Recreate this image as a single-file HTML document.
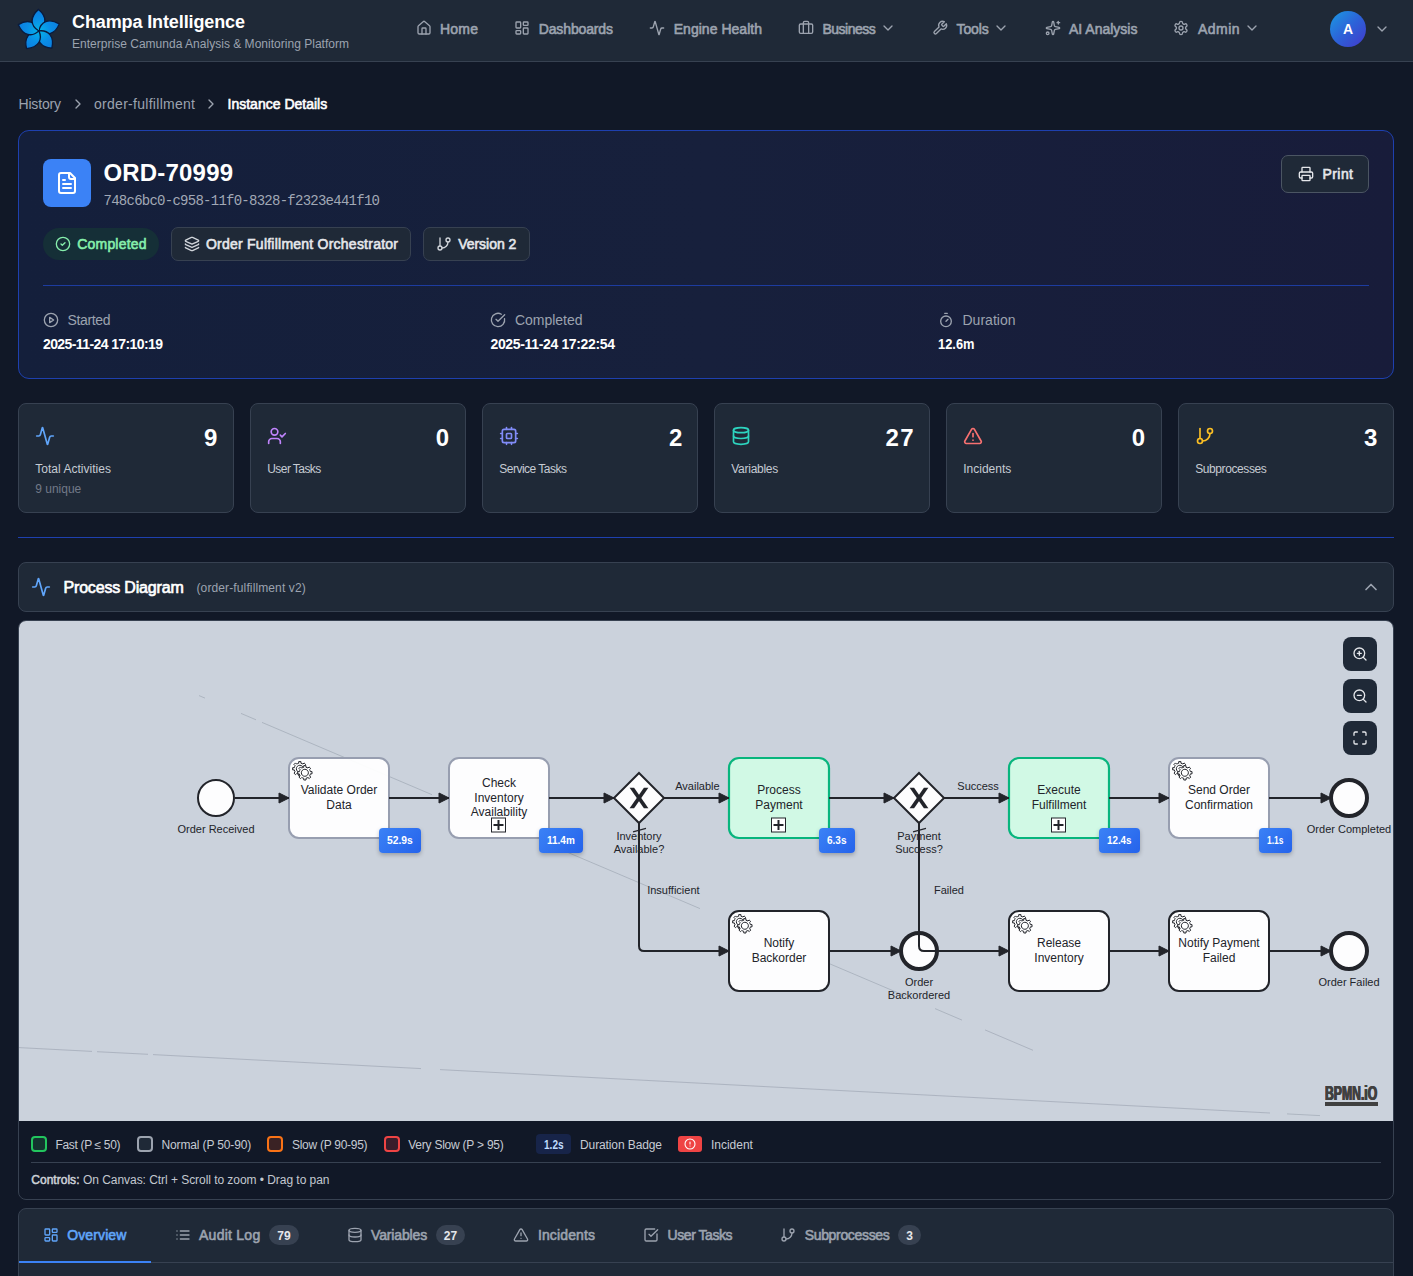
<!DOCTYPE html>
<html lang="en"><head><meta charset="utf-8"><title>Instance Details - Champa Intelligence</title><style>
html,body{margin:0;padding:0}
body{position:relative;width:1413px;height:1276px;overflow:hidden;background:#111827;font-family:"Liberation Sans",Arial,sans-serif;color:#fff}
nav,header,section,a{display:contents}
div,span.t,svg.ic,svg.bpmn{position:absolute;box-sizing:border-box}
svg.ic,svg.bpmn{display:block;overflow:visible}
span.t{white-space:pre;line-height:1;display:block}
span.m{font-family:"Liberation Mono",monospace}
</style></head>
<body>
<nav>
<div style="left:0px;top:0px;width:1413px;height:61px;background:#1f2937;border-bottom:1px solid #374151;box-sizing:content-box"></div>
<svg class="ic" style="left:14px;top:4px" width="50" height="52" viewBox="14 4 50 52"><defs><radialGradient id="pg" gradientUnits="userSpaceOnUse" cx="0" cy="0" r="22"><stop offset="0" stop-color="#04b4e8"/><stop offset=".55" stop-color="#0a8de6"/><stop offset="1" stop-color="#0b7de0"/></radialGradient><clipPath id="half"><rect x="-30" y="-30" width="30" height="60"/></clipPath></defs><g transform="translate(38.9,30.9)" stroke="#0a1b3d" stroke-width="1.3" stroke-linejoin="round" fill="url(#pg)"><path d="M0,0 C-8.2,-4.5 -9.6,-13.5 -0.4,-21.5 C8.2,-14.5 7.8,-6 0,0 Z" transform="rotate(0)"/><path d="M0,0 C-8.2,-4.5 -9.6,-13.5 -0.4,-21.5 C8.2,-14.5 7.8,-6 0,0 Z" transform="rotate(72)"/><path d="M0,0 C-8.2,-4.5 -9.6,-13.5 -0.4,-21.5 C8.2,-14.5 7.8,-6 0,0 Z" transform="rotate(144)"/><path d="M0,0 C-8.2,-4.5 -9.6,-13.5 -0.4,-21.5 C8.2,-14.5 7.8,-6 0,0 Z" transform="rotate(216)"/><path d="M0,0 C-8.2,-4.5 -9.6,-13.5 -0.4,-21.5 C8.2,-14.5 7.8,-6 0,0 Z" transform="rotate(288)"/><path d="M0,0 C-8.2,-4.5 -9.6,-13.5 -0.4,-21.5 C8.2,-14.5 7.8,-6 0,0 Z" clip-path="url(#half)"/></g></svg>
<span class="t" style="left:72.00px;top:13.00px;font-size:18px;color:#fff;font-weight:700;letter-spacing:-0.114px">Champa Intelligence</span>
<span class="t" style="left:72.00px;top:38.00px;font-size:12px;color:#9ca3af;letter-spacing:0.018px">Enterprise Camunda Analysis &amp; Monitoring Platform</span>
<a>
<svg class="ic" style="left:416px;top:20px;color:#9ca3af" width="16" height="16" viewBox="0 0 24 24" fill="none" stroke="currentColor" stroke-width="2" stroke-linecap="round" stroke-linejoin="round"><path d="M15 21v-8a1 1 0 0 0-1-1h-4a1 1 0 0 0-1 1v8"/><path d="M3 10a2 2 0 0 1 .709-1.528l7-5.999a2 2 0 0 1 2.582 0l7 5.999A2 2 0 0 1 21 10v9a2 2 0 0 1-2 2H5a2 2 0 0 1-2-2z"/></svg>
<span class="t" style="left:440.00px;top:22.00px;font-size:14px;color:#9ca3af;-webkit-text-stroke:0.59px currentColor;letter-spacing:0.214px">Home</span>
</a>
<a>
<svg class="ic" style="left:513.5px;top:20px;color:#9ca3af" width="16" height="16" viewBox="0 0 24 24" fill="none" stroke="currentColor" stroke-width="2" stroke-linecap="round" stroke-linejoin="round"><rect width="7" height="9" x="3" y="3" rx="1"/><rect width="7" height="5" x="14" y="3" rx="1"/><rect width="7" height="9" x="14" y="12" rx="1"/><rect width="7" height="5" x="3" y="16" rx="1"/></svg>
<span class="t" style="left:538.75px;top:22.00px;font-size:14px;color:#9ca3af;-webkit-text-stroke:0.59px currentColor;letter-spacing:-0.139px">Dashboards</span>
</a>
<a>
<svg class="ic" style="left:648.75px;top:20px;color:#9ca3af" width="16" height="16" viewBox="0 0 24 24" fill="none" stroke="currentColor" stroke-width="2" stroke-linecap="round" stroke-linejoin="round"><path d="M22 12h-2.48a2 2 0 0 0-1.93 1.46l-2.35 8.36a.25.25 0 0 1-.48 0L9.24 2.18a.25.25 0 0 0-.48 0l-2.35 8.36A2 2 0 0 1 4.49 12H2"/></svg>
<span class="t" style="left:673.75px;top:22.00px;font-size:14px;color:#9ca3af;-webkit-text-stroke:0.59px currentColor;letter-spacing:0.025px">Engine Health</span>
</a>
<a>
<svg class="ic" style="left:797.5px;top:20px;color:#9ca3af" width="16" height="16" viewBox="0 0 24 24" fill="none" stroke="currentColor" stroke-width="2" stroke-linecap="round" stroke-linejoin="round"><path d="M16 20V4a2 2 0 0 0-2-2h-4a2 2 0 0 0-2 2v16"/><rect width="20" height="14" x="2" y="6" rx="2"/></svg>
<span class="t" style="left:822.50px;top:22.00px;font-size:14px;color:#9ca3af;-webkit-text-stroke:0.59px currentColor;letter-spacing:-0.509px">Business</span>
<svg class="ic" style="left:879.8px;top:20.3px;color:#9ca3af" width="16" height="16" viewBox="0 0 24 24" fill="none" stroke="currentColor" stroke-width="2" stroke-linecap="round" stroke-linejoin="round"><path d="m6 9 6 6 6-6"/></svg>
</a>
<a>
<svg class="ic" style="left:932px;top:20px;color:#9ca3af" width="16" height="16" viewBox="0 0 24 24" fill="none" stroke="currentColor" stroke-width="2" stroke-linecap="round" stroke-linejoin="round"><path d="M14.7 6.3a1 1 0 0 0 0 1.4l1.6 1.6a1 1 0 0 0 1.4 0l3.77-3.77a6 6 0 0 1-7.94 7.94l-6.91 6.91a2.12 2.12 0 0 1-3-3l6.91-6.91a6 6 0 0 1 7.94-7.94l-3.76 3.76z"/></svg>
<span class="t" style="left:956.50px;top:22.00px;font-size:14px;color:#9ca3af;-webkit-text-stroke:0.59px currentColor;letter-spacing:-0.109px">Tools</span>
<svg class="ic" style="left:992.8px;top:20.3px;color:#9ca3af" width="16" height="16" viewBox="0 0 24 24" fill="none" stroke="currentColor" stroke-width="2" stroke-linecap="round" stroke-linejoin="round"><path d="m6 9 6 6 6-6"/></svg>
</a>
<a>
<svg class="ic" style="left:1044.7px;top:20px;color:#9ca3af" width="16" height="16" viewBox="0 0 24 24" fill="none" stroke="currentColor" stroke-width="2" stroke-linecap="round" stroke-linejoin="round"><path d="M11.017 2.814a1 1 0 0 1 1.966 0l1.051 5.558a2 2 0 0 0 1.594 1.594l5.558 1.051a1 1 0 0 1 0 1.966l-5.558 1.051a2 2 0 0 0-1.594 1.594l-1.051 5.558a1 1 0 0 1-1.966 0l-1.051-5.558a2 2 0 0 0-1.594-1.594l-5.558-1.051a1 1 0 0 1 0-1.966l5.558-1.051a2 2 0 0 0 1.594-1.594z"/><path d="M20 2v4"/><path d="M22 4h-4"/><circle cx="4" cy="20" r="2"/></svg>
<span class="t" style="left:1069.00px;top:22.00px;font-size:14px;color:#9ca3af;-webkit-text-stroke:0.59px currentColor">AI Analysis</span>
</a>
<a>
<svg class="ic" style="left:1173px;top:20px;color:#9ca3af" width="16" height="16" viewBox="0 0 24 24" fill="none" stroke="currentColor" stroke-width="2" stroke-linecap="round" stroke-linejoin="round"><path d="M12.22 2h-.44a2 2 0 0 0-2 2v.18a2 2 0 0 1-1 1.73l-.43.25a2 2 0 0 1-2 0l-.15-.08a2 2 0 0 0-2.73.73l-.22.38a2 2 0 0 0 .73 2.73l.15.1a2 2 0 0 1 1 1.72v.51a2 2 0 0 1-1 1.74l-.15.09a2 2 0 0 0-.73 2.73l.22.38a2 2 0 0 0 2.73.73l.15-.08a2 2 0 0 1 2 0l.43.25a2 2 0 0 1 1 1.73V20a2 2 0 0 0 2 2h.44a2 2 0 0 0 2-2v-.18a2 2 0 0 1 1-1.73l.43-.25a2 2 0 0 1 2 0l.15.08a2 2 0 0 0 2.73-.73l.22-.39a2 2 0 0 0-.73-2.73l-.15-.08a2 2 0 0 1-1-1.74v-.5a2 2 0 0 1 1-1.74l.15-.09a2 2 0 0 0 .73-2.73l-.22-.38a2 2 0 0 0-2.73-.73l-.15.08a2 2 0 0 1-2 0l-.43-.25a2 2 0 0 1-1-1.73V4a2 2 0 0 0-2-2z"/><circle cx="12" cy="12" r="3"/></svg>
<span class="t" style="left:1198.00px;top:22.00px;font-size:14px;color:#9ca3af;-webkit-text-stroke:0.59px currentColor;letter-spacing:0.453px">Admin</span>
<svg class="ic" style="left:1244.3px;top:20.3px;color:#9ca3af" width="16" height="16" viewBox="0 0 24 24" fill="none" stroke="currentColor" stroke-width="2" stroke-linecap="round" stroke-linejoin="round"><path d="m6 9 6 6 6-6"/></svg>
</a>
<div style="left:1330px;top:11px;width:36px;height:36px;border-radius:50%;background:linear-gradient(135deg,#1a9be3 0%,#2c62d8 50%,#4338ca 100%)"></div>
<span class="t" style="left:1342.94px;top:22.00px;font-size:14px;color:#fff;font-weight:700">A</span>
<svg class="ic" style="left:1374px;top:21px;color:#9ca3af" width="16" height="16" viewBox="0 0 24 24" fill="none" stroke="currentColor" stroke-width="2" stroke-linecap="round" stroke-linejoin="round"><path d="m6 9 6 6 6-6"/></svg>
</nav>
<header>
<span class="t" style="left:18.50px;top:97.00px;font-size:14px;color:#9ca3af;letter-spacing:-0.177px">History</span>
<svg class="ic" style="left:70px;top:96px;color:#9ca3af" width="16" height="16" viewBox="0 0 24 24" fill="none" stroke="currentColor" stroke-width="2" stroke-linecap="round" stroke-linejoin="round"><path d="m9 18 6-6-6-6"/></svg>
<span class="t" style="left:94.00px;top:97.00px;font-size:14px;color:#9ca3af;letter-spacing:0.282px">order-fulfillment</span>
<svg class="ic" style="left:203px;top:96px;color:#9ca3af" width="16" height="16" viewBox="0 0 24 24" fill="none" stroke="currentColor" stroke-width="2" stroke-linecap="round" stroke-linejoin="round"><path d="m9 18 6-6-6-6"/></svg>
<span class="t" style="left:227.50px;top:97.00px;font-size:14px;color:#fff;-webkit-text-stroke:0.59px currentColor;letter-spacing:0.009px">Instance Details</span>
</header>
<section>
<div style="left:18px;top:130px;width:1376px;height:249px;border:1px solid #1e40af;border-radius:11px;background:linear-gradient(90deg,#141f3b,#17203c 50%,#181c3a)"></div>
<div style="left:43px;top:159px;width:48px;height:48px;background:#3b82f6;border-radius:8px"></div>
<svg class="ic" style="left:55px;top:171px;color:#fff" width="24" height="24" viewBox="0 0 24 24" fill="none" stroke="currentColor" stroke-width="2" stroke-linecap="round" stroke-linejoin="round"><path d="M15 2H6a2 2 0 0 0-2 2v16a2 2 0 0 0 2 2h12a2 2 0 0 0 2-2V7Z"/><path d="M14 2v4a2 2 0 0 0 2 2h4"/><path d="M10 9H8"/><path d="M16 13H8"/><path d="M16 17H8"/></svg>
<span class="t" style="left:103.50px;top:161.00px;font-size:24px;color:#fff;font-weight:700;letter-spacing:0.180px">ORD-70999</span>
<span class="t m" style="left:103.50px;top:194.00px;font-size:14px;color:#a1a8b5;letter-spacing:-0.742px">748c6bc0-c958-11f0-8328-f2323e441f10</span>
<div style="left:43px;top:228px;width:116px;height:32px;background:#152f37;border-radius:16px"></div>
<svg class="ic" style="left:55px;top:236px;color:#86efac" width="16" height="16" viewBox="0 0 24 24" fill="none" stroke="currentColor" stroke-width="2" stroke-linecap="round" stroke-linejoin="round"><circle cx="12" cy="12" r="10"/><path d="m9 12 2 2 4-4"/></svg>
<span class="t" style="left:77.25px;top:237.00px;font-size:14px;color:#86efac;-webkit-text-stroke:0.59px currentColor;letter-spacing:0.193px">Completed</span>
<div style="left:171px;top:227px;width:240px;height:34px;background:#1f2937;border:1px solid #374151;border-radius:7px"></div>
<svg class="ic" style="left:184px;top:236px;color:#d1d5db" width="16" height="16" viewBox="0 0 24 24" fill="none" stroke="currentColor" stroke-width="2" stroke-linecap="round" stroke-linejoin="round"><path d="M12.83 2.18a2 2 0 0 0-1.66 0L2.6 6.08a1 1 0 0 0 0 1.83l8.58 3.91a2 2 0 0 0 1.66 0l8.58-3.9a1 1 0 0 0 0-1.83z"/><path d="M2 12a1 1 0 0 0 .58.91l8.6 3.91a2 2 0 0 0 1.65 0l8.58-3.9A1 1 0 0 0 22 12"/><path d="M2 17a1 1 0 0 0 .58.91l8.6 3.91a2 2 0 0 0 1.65 0l8.58-3.9A1 1 0 0 0 22 17"/></svg>
<span class="t" style="left:206.00px;top:237.00px;font-size:14px;color:#e5e7eb;-webkit-text-stroke:0.59px currentColor;letter-spacing:0.235px">Order Fulfillment Orchestrator</span>
<div style="left:423px;top:227px;width:107px;height:34px;background:#1f2937;border:1px solid #374151;border-radius:7px"></div>
<svg class="ic" style="left:436px;top:236px;color:#d1d5db" width="16" height="16" viewBox="0 0 24 24" fill="none" stroke="currentColor" stroke-width="2" stroke-linecap="round" stroke-linejoin="round"><line x1="6" x2="6" y1="3" y2="15"/><circle cx="18" cy="6" r="3"/><circle cx="6" cy="18" r="3"/><path d="M18 9a9 9 0 0 1-9 9"/></svg>
<span class="t" style="left:458.25px;top:237.00px;font-size:14px;color:#e5e7eb;-webkit-text-stroke:0.59px currentColor;letter-spacing:-0.047px">Version 2</span>
<div style="left:1281px;top:155px;width:88px;height:38px;background:#1f2937;border:1px solid #4b5563;border-radius:7px"></div>
<svg class="ic" style="left:1298px;top:166px;color:#e5e7eb" width="16" height="16" viewBox="0 0 24 24" fill="none" stroke="currentColor" stroke-width="2" stroke-linecap="round" stroke-linejoin="round"><path d="M6 18H4a2 2 0 0 1-2-2v-5a2 2 0 0 1 2-2h16a2 2 0 0 1 2 2v5a2 2 0 0 1-2 2h-2"/><path d="M6 9V3a1 1 0 0 1 1-1h10a1 1 0 0 1 1 1v6"/><rect x="6" y="14" width="12" height="8" rx="1"/></svg>
<span class="t" style="left:1322.50px;top:167.00px;font-size:14px;color:#e5e7eb;-webkit-text-stroke:0.59px currentColor;letter-spacing:0.426px">Print</span>
<div style="left:43px;top:285px;width:1326px;height:1px;background:#1d3ca0"></div>
<svg class="ic" style="left:43px;top:312px;color:#9ca3af" width="16" height="16" viewBox="0 0 24 24" fill="none" stroke="currentColor" stroke-width="2" stroke-linecap="round" stroke-linejoin="round"><circle cx="12" cy="12" r="10"/><polygon points="10 8 16 12 10 16 10 8"/></svg>
<span class="t" style="left:67.50px;top:313.00px;font-size:14px;color:#9ca3af;letter-spacing:-0.357px">Started</span>
<span class="t" style="left:43.00px;top:337.00px;font-size:14px;color:#fff;font-weight:700;letter-spacing:-0.599px">2025-11-24 17:10:19</span>
<svg class="ic" style="left:490px;top:312px;color:#9ca3af" width="16" height="16" viewBox="0 0 24 24" fill="none" stroke="currentColor" stroke-width="2" stroke-linecap="round" stroke-linejoin="round"><path d="M21.801 10A10 10 0 1 1 17 3.335"/><path d="m9 11 3 3L22 4"/></svg>
<span class="t" style="left:515.00px;top:313.00px;font-size:14px;color:#9ca3af;letter-spacing:-0.025px">Completed</span>
<span class="t" style="left:490.50px;top:337.00px;font-size:14px;color:#fff;font-weight:700;letter-spacing:-0.349px">2025-11-24 17:22:54</span>
<svg class="ic" style="left:938px;top:312px;color:#9ca3af" width="16" height="16" viewBox="0 0 24 24" fill="none" stroke="currentColor" stroke-width="2" stroke-linecap="round" stroke-linejoin="round"><line x1="10" x2="14" y1="2" y2="2"/><line x1="12" x2="15" y1="14" y2="11"/><circle cx="12" cy="14" r="8"/></svg>
<span class="t" style="left:962.50px;top:313.00px;font-size:14px;color:#9ca3af;letter-spacing:0.011px">Duration</span>
<span class="t" style="left:938.00px;top:337.00px;font-size:14px;color:#fff;font-weight:700;transform:scaleX(0.919);transform-origin:0 0">12.6m</span>
</section>
<section>
<div style="left:18px;top:403px;width:216px;height:110px;background:#1f2937;border:1px solid #374151;border-radius:8px"></div>
<svg class="ic" style="left:35px;top:426px;color:#60a5fa" width="20" height="20" viewBox="0 0 24 24" fill="none" stroke="currentColor" stroke-width="2" stroke-linecap="round" stroke-linejoin="round"><path d="M22 12h-2.48a2 2 0 0 0-1.93 1.46l-2.35 8.36a.25.25 0 0 1-.48 0L9.24 2.18a.25.25 0 0 0-.48 0l-2.35 8.36A2 2 0 0 1 4.49 12H2"/></svg>
<span class="t" style="left:204.00px;top:426.00px;font-size:24px;color:#fff;font-weight:700">9</span>
<span class="t" style="left:35.25px;top:463.00px;font-size:12px;color:#c6cbd3;letter-spacing:0.025px">Total Activities</span>
<span class="t" style="left:35.25px;top:483.00px;font-size:12px;color:#727988;letter-spacing:-0.007px">9 unique</span>
<div style="left:250px;top:403px;width:216px;height:110px;background:#1f2937;border:1px solid #374151;border-radius:8px"></div>
<svg class="ic" style="left:267px;top:426px;color:#c084fc" width="20" height="20" viewBox="0 0 24 24" fill="none" stroke="currentColor" stroke-width="2" stroke-linecap="round" stroke-linejoin="round"><path d="m16 11 2 2 4-4"/><path d="M16 21v-2a4 4 0 0 0-4-4H6a4 4 0 0 0-4 4v2"/><circle cx="9" cy="7" r="4"/></svg>
<span class="t" style="left:435.75px;top:426.00px;font-size:24px;color:#fff;font-weight:700">0</span>
<span class="t" style="left:267.25px;top:463.00px;font-size:12px;color:#c6cbd3;letter-spacing:-0.571px">User Tasks</span>
<div style="left:482px;top:403px;width:216px;height:110px;background:#1f2937;border:1px solid #374151;border-radius:8px"></div>
<svg class="ic" style="left:499px;top:426px;color:#818cf8" width="20" height="20" viewBox="0 0 24 24" fill="none" stroke="currentColor" stroke-width="2" stroke-linecap="round" stroke-linejoin="round"><rect width="16" height="16" x="4" y="4" rx="2"/><rect width="6" height="6" x="9" y="9" rx="1"/><path d="M15 2v2"/><path d="M15 20v2"/><path d="M2 15h2"/><path d="M2 9h2"/><path d="M20 15h2"/><path d="M20 9h2"/><path d="M9 2v2"/><path d="M9 20v2"/></svg>
<span class="t" style="left:669.00px;top:426.00px;font-size:24px;color:#fff;font-weight:700">2</span>
<span class="t" style="left:499.25px;top:463.00px;font-size:12px;color:#c6cbd3;letter-spacing:-0.505px">Service Tasks</span>
<div style="left:714px;top:403px;width:216px;height:110px;background:#1f2937;border:1px solid #374151;border-radius:8px"></div>
<svg class="ic" style="left:731px;top:426px;color:#2dd4bf" width="20" height="20" viewBox="0 0 24 24" fill="none" stroke="currentColor" stroke-width="2" stroke-linecap="round" stroke-linejoin="round"><ellipse cx="12" cy="5" rx="9" ry="3"/><path d="M3 5V19A9 3 0 0 0 21 19V5"/><path d="M3 12A9 3 0 0 0 21 12"/></svg>
<span class="t" style="left:885.50px;top:426.00px;font-size:24px;color:#fff;font-weight:700;letter-spacing:1.297px">27</span>
<span class="t" style="left:731.25px;top:463.00px;font-size:12px;color:#c6cbd3;letter-spacing:-0.268px">Variables</span>
<div style="left:946px;top:403px;width:216px;height:110px;background:#1f2937;border:1px solid #374151;border-radius:8px"></div>
<svg class="ic" style="left:963px;top:426px;color:#f87171" width="20" height="20" viewBox="0 0 24 24" fill="none" stroke="currentColor" stroke-width="2" stroke-linecap="round" stroke-linejoin="round"><path d="m21.73 18-8-14a2 2 0 0 0-3.48 0l-8 14A2 2 0 0 0 4 21h16a2 2 0 0 0 1.73-3"/><path d="M12 9v4"/><path d="M12 17h.01"/></svg>
<span class="t" style="left:1131.75px;top:426.00px;font-size:24px;color:#fff;font-weight:700">0</span>
<span class="t" style="left:963.25px;top:463.00px;font-size:12px;color:#c6cbd3">Incidents</span>
<div style="left:1178px;top:403px;width:216px;height:110px;background:#1f2937;border:1px solid #374151;border-radius:8px"></div>
<svg class="ic" style="left:1195px;top:426px;color:#fbbf24" width="20" height="20" viewBox="0 0 24 24" fill="none" stroke="currentColor" stroke-width="2" stroke-linecap="round" stroke-linejoin="round"><line x1="6" x2="6" y1="3" y2="15"/><circle cx="18" cy="6" r="3"/><circle cx="6" cy="18" r="3"/><path d="M18 9a9 9 0 0 1-9 9"/></svg>
<span class="t" style="left:1364.00px;top:426.00px;font-size:24px;color:#fff;font-weight:700">3</span>
<span class="t" style="left:1195.25px;top:463.00px;font-size:12px;color:#c6cbd3;letter-spacing:-0.413px">Subprocesses</span>
</section>
<div style="left:18px;top:537px;width:1376px;height:1px;background:#1e40af"></div>
<section>
<div style="left:18px;top:562px;width:1376px;height:50px;background:#1f2937;border:1px solid #374151;border-radius:8px"></div>
<svg class="ic" style="left:31px;top:577px;color:#60a5fa" width="20" height="20" viewBox="0 0 24 24" fill="none" stroke="currentColor" stroke-width="2" stroke-linecap="round" stroke-linejoin="round"><path d="M22 12h-2.48a2 2 0 0 0-1.93 1.46l-2.35 8.36a.25.25 0 0 1-.48 0L9.24 2.18a.25.25 0 0 0-.48 0l-2.35 8.36A2 2 0 0 1 4.49 12H2"/></svg>
<span class="t" style="left:63.50px;top:580.00px;font-size:16px;color:#fff;-webkit-text-stroke:0.67px currentColor;letter-spacing:-0.175px">Process Diagram</span>
<span class="t" style="left:196.50px;top:582.00px;font-size:12px;color:#9ca3af;letter-spacing:0.121px">(order-fulfillment v2)</span>
<svg class="ic" style="left:1361px;top:577px;color:#9ca3af" width="20" height="20" viewBox="0 0 24 24" fill="none" stroke="currentColor" stroke-width="2" stroke-linecap="round" stroke-linejoin="round"><path d="m18 15-6-6-6 6"/></svg>
<div style="left:18px;top:620px;width:1376px;height:580px;background:#111827;border:1px solid #374151;border-radius:8px"></div>
<div style="left:19px;top:621px;width:1374px;height:500px;background:#cbd2dc;border-radius:7px 7px 0 0"></div>
<svg class="bpmn" style="left:19px;top:621px" width="1374" height="500" viewBox="19 621 1374 500" font-family="'Liberation Sans', Arial, sans-serif" fill="#22242a"><defs><marker id="arr" viewBox="0 0 20 20" refX="11" refY="10" markerWidth="10" markerHeight="10" orient="auto"><path d="M 1 5 L 11 10 L 1 15 Z" fill="#22242a" stroke="#22242a" stroke-width="1"/></marker></defs><g stroke="#7c8594" stroke-width=".55" opacity=".7" fill="none"><path d="M199,695.6 L205,698.1 M241,713.4 L256,719.8 M262,722.4 L432,794.7 M568,852.5 L700,908.6 M829,963.5 L905,995.8 M935,1008.6 L962,1020.1 M985,1029.9 L1033,1050.3"/><path d="M19,1047.6 L92,1051.4 M97,1051.7 L148,1054.3 M153,1054.6 L421,1068.6 M440,1069.6 L1270,1113.0 M1287,1113.9 L1320,1115.6"/></g><circle cx="216" cy="798" r="18" fill="#fff" fill-opacity=".95" stroke="#22242a" stroke-width="2"/><circle cx="1349" cy="798" r="18" fill="#fff" fill-opacity=".95" stroke="#22242a" stroke-width="4"/><circle cx="1349" cy="951" r="18" fill="#fff" fill-opacity=".95" stroke="#22242a" stroke-width="4"/><circle cx="919" cy="951" r="18" fill="#fff" fill-opacity=".95" stroke="#22242a" stroke-width="4"/><g><rect x="289" y="758" width="100" height="80" rx="10" ry="10" fill="#ffffff" fill-opacity=".95" stroke="#979eb0" stroke-width="2"/><text x="339" y="794.4" font-size="12" text-anchor="middle">Validate Order</text><text x="339" y="808.8" font-size="12" text-anchor="middle">Data</text><path d="m 301,776 v -1.71335 c 0.352326,-0.0705 0.703932,-0.17838 1.047628,-0.32133 0.344416,-0.14465 0.665822,-0.32133 0.966377,-0.52145 l 1.19431,1.18005 1.567487,-1.57688 -1.195028,-1.18014 c 0.403376,-0.61394 0.683079,-1.29908 0.825447,-2.01824 l 1.622133,-0.01 v -2.2196 l -1.636514,0.01 c -0.07333,-0.35153 -0.178319,-0.70024 -0.323564,-1.04372 -0.145244,-0.34406 -0.321407,-0.6644 -0.522735,-0.96217 l 1.131035,-1.13631 -1.583305,-1.56293 -1.129598,1.13589 c -0.614052,-0.40108 -1.302883,-0.68093 -2.022633,-0.82247 l 0.0093,-1.61852 h -2.241173 l 0.0042,1.63124 c -0.353763,0.0736 -0.705369,0.17977 -1.049785,0.32371 -0.344415,0.14437 -0.665102,0.32092 -0.9635006,0.52046 l -1.1698628,-1.15823 -1.5667691,1.5792 1.1684265,1.15669 c -0.4026573,0.61283 -0.68308,1.29797 -0.8247287,2.01713 l -1.6588041,0.003 v 2.22174 l 1.6724648,-0.006 c 0.073327,0.35077 0.1797598,0.70243 0.3242851,1.04472 0.1452428,0.34448 0.3214064,0.6644 0.5227339,0.96066 l -1.1993431,1.19723 1.5840256,1.56011 1.1964668,-1.19348 c 0.6140517,0.40346 1.3028827,0.68232 2.0233517,0.82331 l 7.19e-4,1.69892 h 2.226848 z m 0.221462,-3.9957 c -1.788948,0.7502 -3.8576,-0.0928 -4.6097055,-1.87438 -0.7521065,-1.78321 0.090598,-3.84627 1.8802645,-4.59604 1.78823,-0.74936 3.856881,0.0929 4.608987,1.87437 0.752106,1.78165 -0.0906,3.84612 -1.879546,4.59605 z" fill="#fff" stroke="#22242a" stroke-width="1"/><path d="m 306.2,776 c -1.788948,0.7502 -3.8576,-0.0928 -4.6097055,-1.87438 -0.7521065,-1.78321 0.090598,-3.84627 1.8802645,-4.59604 1.78823,-0.74936 3.856881,0.0929 4.608987,1.87437 0.752106,1.78165 -0.0906,3.84612 -1.879546,4.59605 z" fill="#fff" stroke="none"/><path d="m 306,780 v -1.71335 c 0.352326,-0.0705 0.703932,-0.17838 1.047628,-0.32133 0.344416,-0.14465 0.665822,-0.32133 0.966377,-0.52145 l 1.19431,1.18005 1.567487,-1.57688 -1.195028,-1.18014 c 0.403376,-0.61394 0.683079,-1.29908 0.825447,-2.01824 l 1.622133,-0.01 v -2.2196 l -1.636514,0.01 c -0.07333,-0.35153 -0.178319,-0.70024 -0.323564,-1.04372 -0.145244,-0.34406 -0.321407,-0.6644 -0.522735,-0.96217 l 1.131035,-1.13631 -1.583305,-1.56293 -1.129598,1.13589 c -0.614052,-0.40108 -1.302883,-0.68093 -2.022633,-0.82247 l 0.0093,-1.61852 h -2.241173 l 0.0042,1.63124 c -0.353763,0.0736 -0.705369,0.17977 -1.049785,0.32371 -0.344415,0.14437 -0.665102,0.32092 -0.9635006,0.52046 l -1.1698628,-1.15823 -1.5667691,1.5792 1.1684265,1.15669 c -0.4026573,0.61283 -0.68308,1.29797 -0.8247287,2.01713 l -1.6588041,0.003 v 2.22174 l 1.6724648,-0.006 c 0.073327,0.35077 0.1797598,0.70243 0.3242851,1.04472 0.1452428,0.34448 0.3214064,0.6644 0.5227339,0.96066 l -1.1993431,1.19723 1.5840256,1.56011 1.1964668,-1.19348 c 0.6140517,0.40346 1.3028827,0.68232 2.0233517,0.82331 l 7.19e-4,1.69892 h 2.226848 z m 0.221462,-3.9957 c -1.788948,0.7502 -3.8576,-0.0928 -4.6097055,-1.87438 -0.7521065,-1.78321 0.090598,-3.84627 1.8802645,-4.59604 1.78823,-0.74936 3.856881,0.0929 4.608987,1.87437 0.752106,1.78165 -0.0906,3.84612 -1.879546,4.59605 z" fill="#fff" stroke="#22242a" stroke-width="1"/></g><g><rect x="449" y="758" width="100" height="80" rx="10" ry="10" fill="#ffffff" fill-opacity=".95" stroke="#979eb0" stroke-width="2"/><text x="499" y="787.2" font-size="12" text-anchor="middle">Check</text><text x="499" y="801.6" font-size="12" text-anchor="middle">Inventory</text><text x="499" y="816" font-size="12" text-anchor="middle">Availability</text><rect x="491.5" y="818" width="14" height="14" fill="#fff" stroke="#22242a" stroke-width="1"/><path d="M498.5,820 v10 M493.5,825 h10" stroke="#22242a" stroke-width="2" fill="none"/></g><g><rect x="729" y="758" width="100" height="80" rx="10" ry="10" fill="#d1f9e5" fill-opacity="1" stroke="#08b57d" stroke-width="2.2"/><text x="779" y="794.4" font-size="12" text-anchor="middle">Process</text><text x="779" y="808.8" font-size="12" text-anchor="middle">Payment</text><rect x="771.5" y="818" width="14" height="14" fill="#fff" stroke="#22242a" stroke-width="1"/><path d="M778.5,820 v10 M773.5,825 h10" stroke="#22242a" stroke-width="2" fill="none"/></g><g><rect x="1009" y="758" width="100" height="80" rx="10" ry="10" fill="#d1f9e5" fill-opacity="1" stroke="#08b57d" stroke-width="2.2"/><text x="1059" y="794.4" font-size="12" text-anchor="middle">Execute</text><text x="1059" y="808.8" font-size="12" text-anchor="middle">Fulfillment</text><rect x="1051.5" y="818" width="14" height="14" fill="#fff" stroke="#22242a" stroke-width="1"/><path d="M1058.5,820 v10 M1053.5,825 h10" stroke="#22242a" stroke-width="2" fill="none"/></g><g><rect x="1169" y="758" width="100" height="80" rx="10" ry="10" fill="#ffffff" fill-opacity=".95" stroke="#979eb0" stroke-width="2"/><text x="1219" y="794.4" font-size="12" text-anchor="middle">Send Order</text><text x="1219" y="808.8" font-size="12" text-anchor="middle">Confirmation</text><path d="m 1181,776 v -1.71335 c 0.352326,-0.0705 0.703932,-0.17838 1.047628,-0.32133 0.344416,-0.14465 0.665822,-0.32133 0.966377,-0.52145 l 1.19431,1.18005 1.567487,-1.57688 -1.195028,-1.18014 c 0.403376,-0.61394 0.683079,-1.29908 0.825447,-2.01824 l 1.622133,-0.01 v -2.2196 l -1.636514,0.01 c -0.07333,-0.35153 -0.178319,-0.70024 -0.323564,-1.04372 -0.145244,-0.34406 -0.321407,-0.6644 -0.522735,-0.96217 l 1.131035,-1.13631 -1.583305,-1.56293 -1.129598,1.13589 c -0.614052,-0.40108 -1.302883,-0.68093 -2.022633,-0.82247 l 0.0093,-1.61852 h -2.241173 l 0.0042,1.63124 c -0.353763,0.0736 -0.705369,0.17977 -1.049785,0.32371 -0.344415,0.14437 -0.665102,0.32092 -0.9635006,0.52046 l -1.1698628,-1.15823 -1.5667691,1.5792 1.1684265,1.15669 c -0.4026573,0.61283 -0.68308,1.29797 -0.8247287,2.01713 l -1.6588041,0.003 v 2.22174 l 1.6724648,-0.006 c 0.073327,0.35077 0.1797598,0.70243 0.3242851,1.04472 0.1452428,0.34448 0.3214064,0.6644 0.5227339,0.96066 l -1.1993431,1.19723 1.5840256,1.56011 1.1964668,-1.19348 c 0.6140517,0.40346 1.3028827,0.68232 2.0233517,0.82331 l 7.19e-4,1.69892 h 2.226848 z m 0.221462,-3.9957 c -1.788948,0.7502 -3.8576,-0.0928 -4.6097055,-1.87438 -0.7521065,-1.78321 0.090598,-3.84627 1.8802645,-4.59604 1.78823,-0.74936 3.856881,0.0929 4.608987,1.87437 0.752106,1.78165 -0.0906,3.84612 -1.879546,4.59605 z" fill="#fff" stroke="#22242a" stroke-width="1"/><path d="m 1186.2,776 c -1.788948,0.7502 -3.8576,-0.0928 -4.6097055,-1.87438 -0.7521065,-1.78321 0.090598,-3.84627 1.8802645,-4.59604 1.78823,-0.74936 3.856881,0.0929 4.608987,1.87437 0.752106,1.78165 -0.0906,3.84612 -1.879546,4.59605 z" fill="#fff" stroke="none"/><path d="m 1186,780 v -1.71335 c 0.352326,-0.0705 0.703932,-0.17838 1.047628,-0.32133 0.344416,-0.14465 0.665822,-0.32133 0.966377,-0.52145 l 1.19431,1.18005 1.567487,-1.57688 -1.195028,-1.18014 c 0.403376,-0.61394 0.683079,-1.29908 0.825447,-2.01824 l 1.622133,-0.01 v -2.2196 l -1.636514,0.01 c -0.07333,-0.35153 -0.178319,-0.70024 -0.323564,-1.04372 -0.145244,-0.34406 -0.321407,-0.6644 -0.522735,-0.96217 l 1.131035,-1.13631 -1.583305,-1.56293 -1.129598,1.13589 c -0.614052,-0.40108 -1.302883,-0.68093 -2.022633,-0.82247 l 0.0093,-1.61852 h -2.241173 l 0.0042,1.63124 c -0.353763,0.0736 -0.705369,0.17977 -1.049785,0.32371 -0.344415,0.14437 -0.665102,0.32092 -0.9635006,0.52046 l -1.1698628,-1.15823 -1.5667691,1.5792 1.1684265,1.15669 c -0.4026573,0.61283 -0.68308,1.29797 -0.8247287,2.01713 l -1.6588041,0.003 v 2.22174 l 1.6724648,-0.006 c 0.073327,0.35077 0.1797598,0.70243 0.3242851,1.04472 0.1452428,0.34448 0.3214064,0.6644 0.5227339,0.96066 l -1.1993431,1.19723 1.5840256,1.56011 1.1964668,-1.19348 c 0.6140517,0.40346 1.3028827,0.68232 2.0233517,0.82331 l 7.19e-4,1.69892 h 2.226848 z m 0.221462,-3.9957 c -1.788948,0.7502 -3.8576,-0.0928 -4.6097055,-1.87438 -0.7521065,-1.78321 0.090598,-3.84627 1.8802645,-4.59604 1.78823,-0.74936 3.856881,0.0929 4.608987,1.87437 0.752106,1.78165 -0.0906,3.84612 -1.879546,4.59605 z" fill="#fff" stroke="#22242a" stroke-width="1"/></g><g><rect x="729" y="911" width="100" height="80" rx="10" ry="10" fill="#ffffff" fill-opacity=".95" stroke="#22242a" stroke-width="2"/><text x="779" y="947.4" font-size="12" text-anchor="middle">Notify</text><text x="779" y="961.8" font-size="12" text-anchor="middle">Backorder</text><path d="m 741,929 v -1.71335 c 0.352326,-0.0705 0.703932,-0.17838 1.047628,-0.32133 0.344416,-0.14465 0.665822,-0.32133 0.966377,-0.52145 l 1.19431,1.18005 1.567487,-1.57688 -1.195028,-1.18014 c 0.403376,-0.61394 0.683079,-1.29908 0.825447,-2.01824 l 1.622133,-0.01 v -2.2196 l -1.636514,0.01 c -0.07333,-0.35153 -0.178319,-0.70024 -0.323564,-1.04372 -0.145244,-0.34406 -0.321407,-0.6644 -0.522735,-0.96217 l 1.131035,-1.13631 -1.583305,-1.56293 -1.129598,1.13589 c -0.614052,-0.40108 -1.302883,-0.68093 -2.022633,-0.82247 l 0.0093,-1.61852 h -2.241173 l 0.0042,1.63124 c -0.353763,0.0736 -0.705369,0.17977 -1.049785,0.32371 -0.344415,0.14437 -0.665102,0.32092 -0.9635006,0.52046 l -1.1698628,-1.15823 -1.5667691,1.5792 1.1684265,1.15669 c -0.4026573,0.61283 -0.68308,1.29797 -0.8247287,2.01713 l -1.6588041,0.003 v 2.22174 l 1.6724648,-0.006 c 0.073327,0.35077 0.1797598,0.70243 0.3242851,1.04472 0.1452428,0.34448 0.3214064,0.6644 0.5227339,0.96066 l -1.1993431,1.19723 1.5840256,1.56011 1.1964668,-1.19348 c 0.6140517,0.40346 1.3028827,0.68232 2.0233517,0.82331 l 7.19e-4,1.69892 h 2.226848 z m 0.221462,-3.9957 c -1.788948,0.7502 -3.8576,-0.0928 -4.6097055,-1.87438 -0.7521065,-1.78321 0.090598,-3.84627 1.8802645,-4.59604 1.78823,-0.74936 3.856881,0.0929 4.608987,1.87437 0.752106,1.78165 -0.0906,3.84612 -1.879546,4.59605 z" fill="#fff" stroke="#22242a" stroke-width="1"/><path d="m 746.2,929 c -1.788948,0.7502 -3.8576,-0.0928 -4.6097055,-1.87438 -0.7521065,-1.78321 0.090598,-3.84627 1.8802645,-4.59604 1.78823,-0.74936 3.856881,0.0929 4.608987,1.87437 0.752106,1.78165 -0.0906,3.84612 -1.879546,4.59605 z" fill="#fff" stroke="none"/><path d="m 746,933 v -1.71335 c 0.352326,-0.0705 0.703932,-0.17838 1.047628,-0.32133 0.344416,-0.14465 0.665822,-0.32133 0.966377,-0.52145 l 1.19431,1.18005 1.567487,-1.57688 -1.195028,-1.18014 c 0.403376,-0.61394 0.683079,-1.29908 0.825447,-2.01824 l 1.622133,-0.01 v -2.2196 l -1.636514,0.01 c -0.07333,-0.35153 -0.178319,-0.70024 -0.323564,-1.04372 -0.145244,-0.34406 -0.321407,-0.6644 -0.522735,-0.96217 l 1.131035,-1.13631 -1.583305,-1.56293 -1.129598,1.13589 c -0.614052,-0.40108 -1.302883,-0.68093 -2.022633,-0.82247 l 0.0093,-1.61852 h -2.241173 l 0.0042,1.63124 c -0.353763,0.0736 -0.705369,0.17977 -1.049785,0.32371 -0.344415,0.14437 -0.665102,0.32092 -0.9635006,0.52046 l -1.1698628,-1.15823 -1.5667691,1.5792 1.1684265,1.15669 c -0.4026573,0.61283 -0.68308,1.29797 -0.8247287,2.01713 l -1.6588041,0.003 v 2.22174 l 1.6724648,-0.006 c 0.073327,0.35077 0.1797598,0.70243 0.3242851,1.04472 0.1452428,0.34448 0.3214064,0.6644 0.5227339,0.96066 l -1.1993431,1.19723 1.5840256,1.56011 1.1964668,-1.19348 c 0.6140517,0.40346 1.3028827,0.68232 2.0233517,0.82331 l 7.19e-4,1.69892 h 2.226848 z m 0.221462,-3.9957 c -1.788948,0.7502 -3.8576,-0.0928 -4.6097055,-1.87438 -0.7521065,-1.78321 0.090598,-3.84627 1.8802645,-4.59604 1.78823,-0.74936 3.856881,0.0929 4.608987,1.87437 0.752106,1.78165 -0.0906,3.84612 -1.879546,4.59605 z" fill="#fff" stroke="#22242a" stroke-width="1"/></g><g><rect x="1009" y="911" width="100" height="80" rx="10" ry="10" fill="#ffffff" fill-opacity=".95" stroke="#22242a" stroke-width="2"/><text x="1059" y="947.4" font-size="12" text-anchor="middle">Release</text><text x="1059" y="961.8" font-size="12" text-anchor="middle">Inventory</text><path d="m 1021,929 v -1.71335 c 0.352326,-0.0705 0.703932,-0.17838 1.047628,-0.32133 0.344416,-0.14465 0.665822,-0.32133 0.966377,-0.52145 l 1.19431,1.18005 1.567487,-1.57688 -1.195028,-1.18014 c 0.403376,-0.61394 0.683079,-1.29908 0.825447,-2.01824 l 1.622133,-0.01 v -2.2196 l -1.636514,0.01 c -0.07333,-0.35153 -0.178319,-0.70024 -0.323564,-1.04372 -0.145244,-0.34406 -0.321407,-0.6644 -0.522735,-0.96217 l 1.131035,-1.13631 -1.583305,-1.56293 -1.129598,1.13589 c -0.614052,-0.40108 -1.302883,-0.68093 -2.022633,-0.82247 l 0.0093,-1.61852 h -2.241173 l 0.0042,1.63124 c -0.353763,0.0736 -0.705369,0.17977 -1.049785,0.32371 -0.344415,0.14437 -0.665102,0.32092 -0.9635006,0.52046 l -1.1698628,-1.15823 -1.5667691,1.5792 1.1684265,1.15669 c -0.4026573,0.61283 -0.68308,1.29797 -0.8247287,2.01713 l -1.6588041,0.003 v 2.22174 l 1.6724648,-0.006 c 0.073327,0.35077 0.1797598,0.70243 0.3242851,1.04472 0.1452428,0.34448 0.3214064,0.6644 0.5227339,0.96066 l -1.1993431,1.19723 1.5840256,1.56011 1.1964668,-1.19348 c 0.6140517,0.40346 1.3028827,0.68232 2.0233517,0.82331 l 7.19e-4,1.69892 h 2.226848 z m 0.221462,-3.9957 c -1.788948,0.7502 -3.8576,-0.0928 -4.6097055,-1.87438 -0.7521065,-1.78321 0.090598,-3.84627 1.8802645,-4.59604 1.78823,-0.74936 3.856881,0.0929 4.608987,1.87437 0.752106,1.78165 -0.0906,3.84612 -1.879546,4.59605 z" fill="#fff" stroke="#22242a" stroke-width="1"/><path d="m 1026.2,929 c -1.788948,0.7502 -3.8576,-0.0928 -4.6097055,-1.87438 -0.7521065,-1.78321 0.090598,-3.84627 1.8802645,-4.59604 1.78823,-0.74936 3.856881,0.0929 4.608987,1.87437 0.752106,1.78165 -0.0906,3.84612 -1.879546,4.59605 z" fill="#fff" stroke="none"/><path d="m 1026,933 v -1.71335 c 0.352326,-0.0705 0.703932,-0.17838 1.047628,-0.32133 0.344416,-0.14465 0.665822,-0.32133 0.966377,-0.52145 l 1.19431,1.18005 1.567487,-1.57688 -1.195028,-1.18014 c 0.403376,-0.61394 0.683079,-1.29908 0.825447,-2.01824 l 1.622133,-0.01 v -2.2196 l -1.636514,0.01 c -0.07333,-0.35153 -0.178319,-0.70024 -0.323564,-1.04372 -0.145244,-0.34406 -0.321407,-0.6644 -0.522735,-0.96217 l 1.131035,-1.13631 -1.583305,-1.56293 -1.129598,1.13589 c -0.614052,-0.40108 -1.302883,-0.68093 -2.022633,-0.82247 l 0.0093,-1.61852 h -2.241173 l 0.0042,1.63124 c -0.353763,0.0736 -0.705369,0.17977 -1.049785,0.32371 -0.344415,0.14437 -0.665102,0.32092 -0.9635006,0.52046 l -1.1698628,-1.15823 -1.5667691,1.5792 1.1684265,1.15669 c -0.4026573,0.61283 -0.68308,1.29797 -0.8247287,2.01713 l -1.6588041,0.003 v 2.22174 l 1.6724648,-0.006 c 0.073327,0.35077 0.1797598,0.70243 0.3242851,1.04472 0.1452428,0.34448 0.3214064,0.6644 0.5227339,0.96066 l -1.1993431,1.19723 1.5840256,1.56011 1.1964668,-1.19348 c 0.6140517,0.40346 1.3028827,0.68232 2.0233517,0.82331 l 7.19e-4,1.69892 h 2.226848 z m 0.221462,-3.9957 c -1.788948,0.7502 -3.8576,-0.0928 -4.6097055,-1.87438 -0.7521065,-1.78321 0.090598,-3.84627 1.8802645,-4.59604 1.78823,-0.74936 3.856881,0.0929 4.608987,1.87437 0.752106,1.78165 -0.0906,3.84612 -1.879546,4.59605 z" fill="#fff" stroke="#22242a" stroke-width="1"/></g><g><rect x="1169" y="911" width="100" height="80" rx="10" ry="10" fill="#ffffff" fill-opacity=".95" stroke="#22242a" stroke-width="2"/><text x="1219" y="947.4" font-size="12" text-anchor="middle">Notify Payment</text><text x="1219" y="961.8" font-size="12" text-anchor="middle">Failed</text><path d="m 1181,929 v -1.71335 c 0.352326,-0.0705 0.703932,-0.17838 1.047628,-0.32133 0.344416,-0.14465 0.665822,-0.32133 0.966377,-0.52145 l 1.19431,1.18005 1.567487,-1.57688 -1.195028,-1.18014 c 0.403376,-0.61394 0.683079,-1.29908 0.825447,-2.01824 l 1.622133,-0.01 v -2.2196 l -1.636514,0.01 c -0.07333,-0.35153 -0.178319,-0.70024 -0.323564,-1.04372 -0.145244,-0.34406 -0.321407,-0.6644 -0.522735,-0.96217 l 1.131035,-1.13631 -1.583305,-1.56293 -1.129598,1.13589 c -0.614052,-0.40108 -1.302883,-0.68093 -2.022633,-0.82247 l 0.0093,-1.61852 h -2.241173 l 0.0042,1.63124 c -0.353763,0.0736 -0.705369,0.17977 -1.049785,0.32371 -0.344415,0.14437 -0.665102,0.32092 -0.9635006,0.52046 l -1.1698628,-1.15823 -1.5667691,1.5792 1.1684265,1.15669 c -0.4026573,0.61283 -0.68308,1.29797 -0.8247287,2.01713 l -1.6588041,0.003 v 2.22174 l 1.6724648,-0.006 c 0.073327,0.35077 0.1797598,0.70243 0.3242851,1.04472 0.1452428,0.34448 0.3214064,0.6644 0.5227339,0.96066 l -1.1993431,1.19723 1.5840256,1.56011 1.1964668,-1.19348 c 0.6140517,0.40346 1.3028827,0.68232 2.0233517,0.82331 l 7.19e-4,1.69892 h 2.226848 z m 0.221462,-3.9957 c -1.788948,0.7502 -3.8576,-0.0928 -4.6097055,-1.87438 -0.7521065,-1.78321 0.090598,-3.84627 1.8802645,-4.59604 1.78823,-0.74936 3.856881,0.0929 4.608987,1.87437 0.752106,1.78165 -0.0906,3.84612 -1.879546,4.59605 z" fill="#fff" stroke="#22242a" stroke-width="1"/><path d="m 1186.2,929 c -1.788948,0.7502 -3.8576,-0.0928 -4.6097055,-1.87438 -0.7521065,-1.78321 0.090598,-3.84627 1.8802645,-4.59604 1.78823,-0.74936 3.856881,0.0929 4.608987,1.87437 0.752106,1.78165 -0.0906,3.84612 -1.879546,4.59605 z" fill="#fff" stroke="none"/><path d="m 1186,933 v -1.71335 c 0.352326,-0.0705 0.703932,-0.17838 1.047628,-0.32133 0.344416,-0.14465 0.665822,-0.32133 0.966377,-0.52145 l 1.19431,1.18005 1.567487,-1.57688 -1.195028,-1.18014 c 0.403376,-0.61394 0.683079,-1.29908 0.825447,-2.01824 l 1.622133,-0.01 v -2.2196 l -1.636514,0.01 c -0.07333,-0.35153 -0.178319,-0.70024 -0.323564,-1.04372 -0.145244,-0.34406 -0.321407,-0.6644 -0.522735,-0.96217 l 1.131035,-1.13631 -1.583305,-1.56293 -1.129598,1.13589 c -0.614052,-0.40108 -1.302883,-0.68093 -2.022633,-0.82247 l 0.0093,-1.61852 h -2.241173 l 0.0042,1.63124 c -0.353763,0.0736 -0.705369,0.17977 -1.049785,0.32371 -0.344415,0.14437 -0.665102,0.32092 -0.9635006,0.52046 l -1.1698628,-1.15823 -1.5667691,1.5792 1.1684265,1.15669 c -0.4026573,0.61283 -0.68308,1.29797 -0.8247287,2.01713 l -1.6588041,0.003 v 2.22174 l 1.6724648,-0.006 c 0.073327,0.35077 0.1797598,0.70243 0.3242851,1.04472 0.1452428,0.34448 0.3214064,0.6644 0.5227339,0.96066 l -1.1993431,1.19723 1.5840256,1.56011 1.1964668,-1.19348 c 0.6140517,0.40346 1.3028827,0.68232 2.0233517,0.82331 l 7.19e-4,1.69892 h 2.226848 z m 0.221462,-3.9957 c -1.788948,0.7502 -3.8576,-0.0928 -4.6097055,-1.87438 -0.7521065,-1.78321 0.090598,-3.84627 1.8802645,-4.59604 1.78823,-0.74936 3.856881,0.0929 4.608987,1.87437 0.752106,1.78165 -0.0906,3.84612 -1.879546,4.59605 z" fill="#fff" stroke="#22242a" stroke-width="1"/></g><polygon points="639,773 664,798 639,823 614,798" fill="#fff" fill-opacity=".95" stroke="#22242a" stroke-width="2"/><polygon points="629.6,787.8 634.1,787.8 648.4,808.2 643.9,808.2" fill="#22242a"/><polygon points="648.4,787.8 643.9,787.8 629.6,808.2 634.1,808.2" fill="#22242a"/><polygon points="919,773 944,798 919,823 894,798" fill="#fff" fill-opacity=".95" stroke="#22242a" stroke-width="2"/><polygon points="909.6,787.8 914.1,787.8 928.4,808.2 923.9,808.2" fill="#22242a"/><polygon points="928.4,787.8 923.9,787.8 909.6,808.2 914.1,808.2" fill="#22242a"/><text x="216" y="833.2" font-size="11" text-anchor="middle">Order Received</text><text x="1349" y="833.2" font-size="11" text-anchor="middle">Order Completed</text><text x="1349" y="986" font-size="11" text-anchor="middle">Order Failed</text><text x="919" y="986" font-size="11" text-anchor="middle">Order</text><text x="919" y="999" font-size="11" text-anchor="middle">Backordered</text><text x="639" y="840" font-size="11" text-anchor="middle">Inventory</text><text x="639" y="853" font-size="11" text-anchor="middle">Available?</text><text x="919" y="840" font-size="11" text-anchor="middle">Payment</text><text x="919" y="853" font-size="11" text-anchor="middle">Success?</text><text x="675.2" y="790" font-size="11" text-anchor="start">Available</text><text x="957.3" y="790" font-size="11" text-anchor="start">Success</text><text x="647.2" y="893.6" font-size="11" text-anchor="start">Insufficient</text><text x="934" y="893.6" font-size="11" text-anchor="start">Failed</text><path d="M235,798 L289,798" fill="none" stroke="#22242a" stroke-width="2" stroke-linejoin="round" marker-end="url(#arr)"/><path d="M389,798 L449,798" fill="none" stroke="#22242a" stroke-width="2" stroke-linejoin="round" marker-end="url(#arr)"/><path d="M549,798 L614,798" fill="none" stroke="#22242a" stroke-width="2" stroke-linejoin="round" marker-end="url(#arr)"/><path d="M664,798 L729,798" fill="none" stroke="#22242a" stroke-width="2" stroke-linejoin="round" marker-end="url(#arr)"/><path d="M829,798 L894,798" fill="none" stroke="#22242a" stroke-width="2" stroke-linejoin="round" marker-end="url(#arr)"/><path d="M944,798 L1009,798" fill="none" stroke="#22242a" stroke-width="2" stroke-linejoin="round" marker-end="url(#arr)"/><path d="M1109,798 L1169,798" fill="none" stroke="#22242a" stroke-width="2" stroke-linejoin="round" marker-end="url(#arr)"/><path d="M1269,798 L1331,798" fill="none" stroke="#22242a" stroke-width="2" stroke-linejoin="round" marker-end="url(#arr)"/><path d="M829,951 L901,951" fill="none" stroke="#22242a" stroke-width="2" stroke-linejoin="round" marker-end="url(#arr)"/><path d="M1109,951 L1169,951" fill="none" stroke="#22242a" stroke-width="2" stroke-linejoin="round" marker-end="url(#arr)"/><path d="M1269,951 L1331,951" fill="none" stroke="#22242a" stroke-width="2" stroke-linejoin="round" marker-end="url(#arr)"/><path d="M639,823 L639,946 Q639,951 644,951 L729,951" fill="none" stroke="#22242a" stroke-width="2" stroke-linejoin="round" marker-end="url(#arr)"/><path d="M919,823 L919,946 Q919,951 924,951 L1009,951" fill="none" stroke="#22242a" stroke-width="2" stroke-linejoin="round" marker-end="url(#arr)"/><path d="M633,831.8 L646,828.4 M913,831.8 L926,828.4" stroke="#22242a" stroke-width="1.2" fill="none"/></svg>
<div style="left:1343px;top:637px;width:34px;height:34px;background:#1f2937;border-radius:8px"></div>
<svg class="ic" style="left:1352px;top:646px;color:#e5e7eb" width="16" height="16" viewBox="0 0 24 24" fill="none" stroke="currentColor" stroke-width="2" stroke-linecap="round" stroke-linejoin="round"><circle cx="11" cy="11" r="8"/><line x1="21" x2="16.65" y1="21" y2="16.65"/><line x1="11" x2="11" y1="8" y2="14"/><line x1="8" x2="14" y1="11" y2="11"/></svg>
<div style="left:1343px;top:679px;width:34px;height:34px;background:#1f2937;border-radius:8px"></div>
<svg class="ic" style="left:1352px;top:688px;color:#e5e7eb" width="16" height="16" viewBox="0 0 24 24" fill="none" stroke="currentColor" stroke-width="2" stroke-linecap="round" stroke-linejoin="round"><circle cx="11" cy="11" r="8"/><line x1="21" x2="16.65" y1="21" y2="16.65"/><line x1="8" x2="14" y1="11" y2="11"/></svg>
<div style="left:1343px;top:721px;width:34px;height:34px;background:#1f2937;border-radius:8px"></div>
<svg class="ic" style="left:1352px;top:730px;color:#e5e7eb" width="16" height="16" viewBox="0 0 24 24" fill="none" stroke="currentColor" stroke-width="2" stroke-linecap="round" stroke-linejoin="round"><path d="M8 3H5a2 2 0 0 0-2 2v3"/><path d="M21 8V5a2 2 0 0 0-2-2h-3"/><path d="M3 16v3a2 2 0 0 0 2 2h3"/><path d="M16 21h3a2 2 0 0 0 2-2v-3"/></svg>
<div style="left:379px;top:828px;width:42px;height:25px;background:linear-gradient(135deg,#3b82f6,#2563eb);border-radius:4px;box-shadow:0 2px 4px rgba(0,0,0,.25)"></div>
<span class="t" style="left:387.10px;top:835.00px;font-size:11px;color:#fff;font-weight:700;transform:scaleX(0.937);transform-origin:0 0">52.9s</span>
<div style="left:539px;top:828px;width:44px;height:25px;background:linear-gradient(135deg,#3b82f6,#2563eb);border-radius:4px;box-shadow:0 2px 4px rgba(0,0,0,.25)"></div>
<span class="t" style="left:547.10px;top:835.00px;font-size:11px;color:#fff;font-weight:700;transform:scaleX(0.909);transform-origin:0 0">11.4m</span>
<div style="left:819.4px;top:828px;width:35.5px;height:25px;background:linear-gradient(135deg,#3b82f6,#2563eb);border-radius:4px;box-shadow:0 2px 4px rgba(0,0,0,.25)"></div>
<span class="t" style="left:827.40px;top:835.00px;font-size:11px;color:#fff;font-weight:700;transform:scaleX(0.910);transform-origin:0 0">6.3s</span>
<div style="left:1099px;top:828px;width:40.5px;height:25px;background:linear-gradient(135deg,#3b82f6,#2563eb);border-radius:4px;box-shadow:0 2px 4px rgba(0,0,0,.25)"></div>
<span class="t" style="left:1107.00px;top:835.00px;font-size:11px;color:#fff;font-weight:700;transform:scaleX(0.890);transform-origin:0 0">12.4s</span>
<div style="left:1259px;top:828px;width:33px;height:25px;background:linear-gradient(135deg,#3b82f6,#2563eb);border-radius:4px;box-shadow:0 2px 4px rgba(0,0,0,.25)"></div>
<span class="t" style="left:1267.25px;top:835.00px;font-size:11px;color:#fff;font-weight:700;transform:scaleX(0.770);transform-origin:0 0">1.1s</span>
<span class="t" style="left:1325.40px;top:1083.00px;font-size:20.5px;color:#404040;font-weight:700;transform:scaleX(.595);transform-origin:0 0;text-shadow:.8px 0 0 #404040,-.8px 0 0 #404040">BPMN.iO</span>
<div style="left:1325px;top:1102.2px;width:53px;height:3.7px;background:#404040"></div>
<div style="left:31px;top:1136px;width:16px;height:16px;background:#14332f;border:2px solid #22c55e;border-radius:4px"></div>
<span class="t" style="left:55.50px;top:1139.00px;font-size:12px;color:#c6cbd3;letter-spacing:-0.339px">Fast (P ≤ 50)</span>
<div style="left:137px;top:1136px;width:16px;height:16px;background:#1f2937;border:2px solid #9ca3af;border-radius:4px"></div>
<span class="t" style="left:161.50px;top:1139.00px;font-size:12px;color:#c6cbd3;letter-spacing:-0.138px">Normal (P 50-90)</span>
<div style="left:267px;top:1136px;width:16px;height:16px;background:#3a2224;border:2px solid #f97316;border-radius:4px"></div>
<span class="t" style="left:291.90px;top:1139.00px;font-size:12px;color:#c6cbd3;letter-spacing:-0.266px">Slow (P 90-95)</span>
<div style="left:384px;top:1136px;width:16px;height:16px;background:#391d2b;border:2px solid #ef4444;border-radius:4px"></div>
<span class="t" style="left:408.20px;top:1139.00px;font-size:12px;color:#c6cbd3;letter-spacing:-0.229px">Very Slow (P &gt; 95)</span>
<div style="left:536px;top:1134px;width:35px;height:20px;background:#172449;border-radius:4px"></div>
<span class="t" style="left:543.90px;top:1139.00px;font-size:12px;color:#bfdbfe;font-weight:700;transform:scaleX(0.839);transform-origin:0 0">1.2s</span>
<span class="t" style="left:580.00px;top:1139.00px;font-size:12px;color:#c6cbd3;letter-spacing:-0.107px">Duration Badge</span>
<div style="left:678px;top:1136px;width:24px;height:16px;background:#ef4444;border-radius:3px"></div>
<svg class="ic" style="left:684px;top:1138px;color:#fff" width="12" height="12" viewBox="0 0 24 24" fill="none" stroke="currentColor" stroke-width="2.2" stroke-linecap="round" stroke-linejoin="round"><circle cx="12" cy="12" r="10"/><line x1="12" x2="12" y1="8" y2="12"/><line x1="12" x2="12.01" y1="16" y2="16"/></svg>
<span class="t" style="left:710.90px;top:1139.00px;font-size:12px;color:#c6cbd3">Incident</span>
<div style="left:31px;top:1162px;width:1350px;height:1px;background:#374151"></div>
<span class="t" style="left:31.25px;top:1174.00px;font-size:12px;color:#cdd1d8;-webkit-text-stroke:0.50px currentColor;letter-spacing:0.027px">Controls:</span>
<span class="t" style="left:83.00px;top:1174.00px;font-size:12px;color:#c3c8d0;letter-spacing:-0.048px">On Canvas: Ctrl + Scroll to zoom • Drag to pan</span>
</section>
<section>
<div style="left:18px;top:1208px;width:1376px;height:90px;background:#1f2937;border:1px solid #374151;border-radius:8px"></div>
<div style="left:19px;top:1262px;width:1374px;height:1px;background:#374151"></div>
<div style="left:19px;top:1260.5px;width:132px;height:2.5px;background:#3b82f6"></div>
<svg class="ic" style="left:43px;top:1227px;color:#60a5fa" width="16" height="16" viewBox="0 0 24 24" fill="none" stroke="currentColor" stroke-width="2" stroke-linecap="round" stroke-linejoin="round"><rect width="7" height="9" x="3" y="3" rx="1"/><rect width="7" height="5" x="14" y="3" rx="1"/><rect width="7" height="9" x="14" y="12" rx="1"/><rect width="7" height="5" x="3" y="16" rx="1"/></svg>
<span class="t" style="left:67.20px;top:1228.00px;font-size:14px;color:#60a5fa;-webkit-text-stroke:0.59px currentColor;letter-spacing:0.120px">Overview</span>
<svg class="ic" style="left:175px;top:1227px;color:#9ca3af" width="16" height="16" viewBox="0 0 24 24" fill="none" stroke="currentColor" stroke-width="2" stroke-linecap="round" stroke-linejoin="round"><path d="M3 12h.01"/><path d="M3 18h.01"/><path d="M3 6h.01"/><path d="M8 12h13"/><path d="M8 18h13"/><path d="M8 6h13"/></svg>
<span class="t" style="left:199.00px;top:1228.00px;font-size:14px;color:#9ca3af;-webkit-text-stroke:0.59px currentColor;letter-spacing:0.254px">Audit Log</span>
<div style="left:269px;top:1225.3px;width:30px;height:20px;background:#374151;border-radius:10px"></div>
<span class="t" style="left:277.25px;top:1230.00px;font-size:12px;color:#e5e7eb;font-weight:700;letter-spacing:0.141px">79</span>
<svg class="ic" style="left:347px;top:1227px;color:#9ca3af" width="16" height="16" viewBox="0 0 24 24" fill="none" stroke="currentColor" stroke-width="2" stroke-linecap="round" stroke-linejoin="round"><ellipse cx="12" cy="5" rx="9" ry="3"/><path d="M3 5V19A9 3 0 0 0 21 19V5"/><path d="M3 12A9 3 0 0 0 21 12"/></svg>
<span class="t" style="left:371.00px;top:1228.00px;font-size:14px;color:#9ca3af;-webkit-text-stroke:0.59px currentColor;letter-spacing:-0.141px">Variables</span>
<div style="left:436px;top:1225.3px;width:29px;height:20px;background:#374151;border-radius:10px"></div>
<span class="t" style="left:443.75px;top:1230.00px;font-size:12px;color:#e5e7eb;font-weight:700;letter-spacing:0.141px">27</span>
<svg class="ic" style="left:513px;top:1227px;color:#9ca3af" width="16" height="16" viewBox="0 0 24 24" fill="none" stroke="currentColor" stroke-width="2" stroke-linecap="round" stroke-linejoin="round"><path d="m21.73 18-8-14a2 2 0 0 0-3.48 0l-8 14A2 2 0 0 0 4 21h16a2 2 0 0 0 1.73-3"/><path d="M12 9v4"/><path d="M12 17h.01"/></svg>
<span class="t" style="left:537.90px;top:1228.00px;font-size:14px;color:#9ca3af;-webkit-text-stroke:0.59px currentColor;letter-spacing:0.144px">Incidents</span>
<svg class="ic" style="left:643px;top:1227px;color:#9ca3af" width="16" height="16" viewBox="0 0 24 24" fill="none" stroke="currentColor" stroke-width="2" stroke-linecap="round" stroke-linejoin="round"><path d="M21 10.5V19a2 2 0 0 1-2 2H5a2 2 0 0 1-2-2V5a2 2 0 0 1 2-2h12.5"/><path d="m9 11 3 3L22 4"/></svg>
<span class="t" style="left:667.60px;top:1228.00px;font-size:14px;color:#9ca3af;-webkit-text-stroke:0.59px currentColor;letter-spacing:-0.454px">User Tasks</span>
<svg class="ic" style="left:780px;top:1227px;color:#9ca3af" width="16" height="16" viewBox="0 0 24 24" fill="none" stroke="currentColor" stroke-width="2" stroke-linecap="round" stroke-linejoin="round"><line x1="6" x2="6" y1="3" y2="15"/><circle cx="18" cy="6" r="3"/><circle cx="6" cy="18" r="3"/><path d="M18 9a9 9 0 0 1-9 9"/></svg>
<span class="t" style="left:804.70px;top:1228.00px;font-size:14px;color:#9ca3af;-webkit-text-stroke:0.59px currentColor;letter-spacing:-0.329px">Subprocesses</span>
<div style="left:898px;top:1225.3px;width:23px;height:20px;background:#374151;border-radius:10px"></div>
<span class="t" style="left:906.25px;top:1230.00px;font-size:12px;color:#e5e7eb;font-weight:700">3</span>
</section>
</body></html>
